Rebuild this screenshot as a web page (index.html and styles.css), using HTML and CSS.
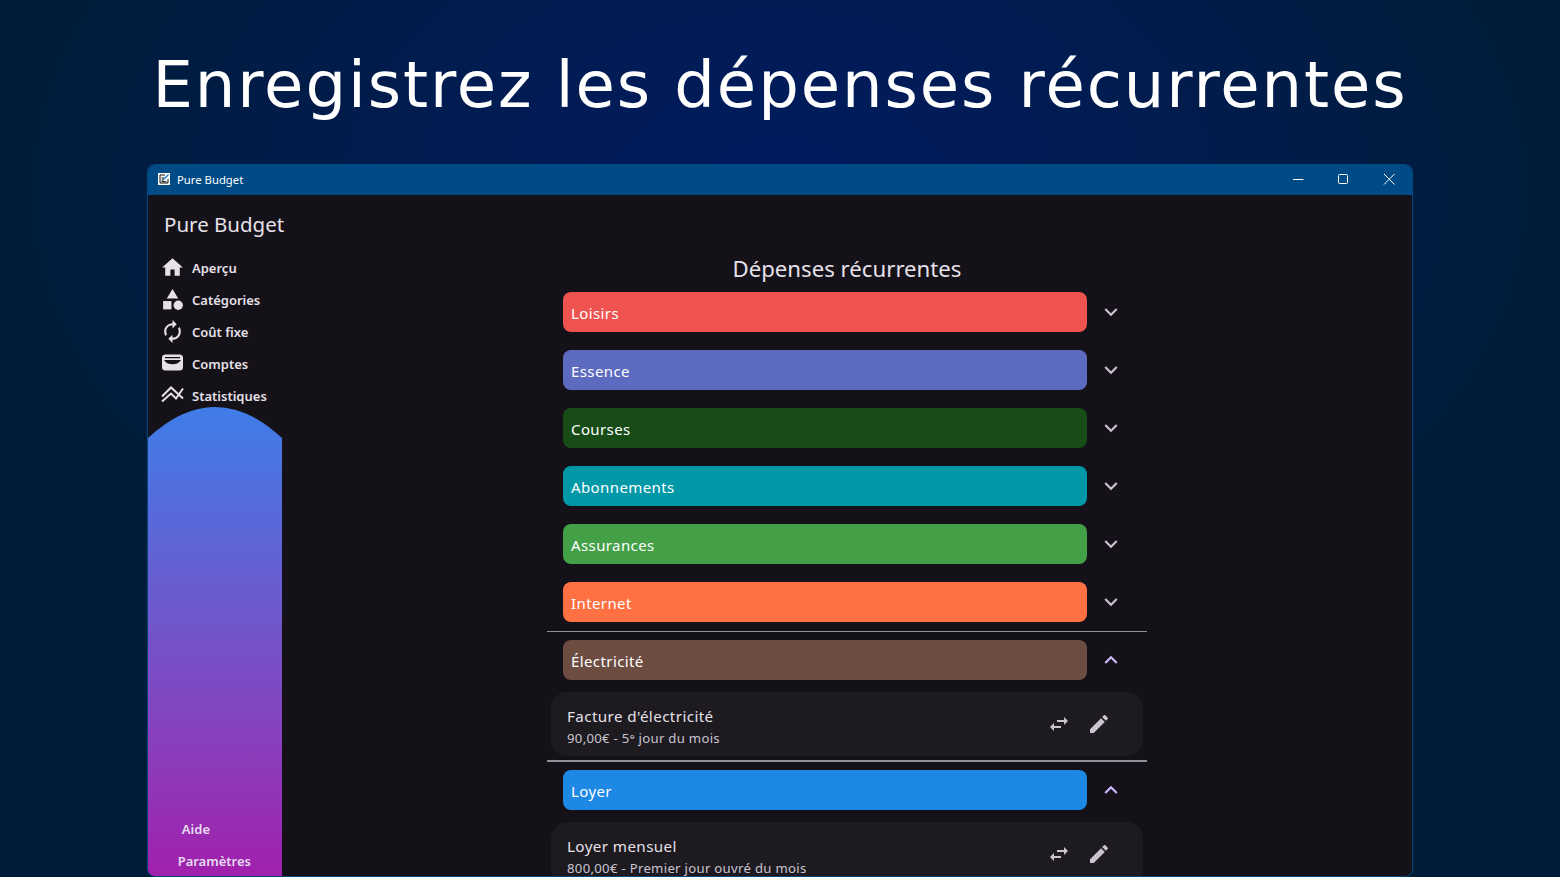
FILE: index.html
```html
<!DOCTYPE html>
<html lang="fr">
<head>
    <meta charset="UTF-8">
    <meta name="viewport" content="width=device-width, initial-scale=1.0">
    <title>Pure Budget</title>
    <link rel="stylesheet" href="styles.css">
</head>
<body>
    <h1 class="headline">Enregistrez les dépenses récurrentes</h1>

    <div class="window">
        <div class="titlebar">
            <svg class="app-logo" viewBox="0 0 12 12">
                <rect width="12" height="12" fill="#fff"/>
                <path d="M7 2H2v8h8V6M3.500 5H6M3.500 7h2.500M3.500 8.700h5" fill="none" stroke="#111" stroke-width="1"/>
                <path d="M5.500 6.500L10.500 1.500" stroke="#1a7fd0" stroke-width="1.500"/>
            </svg>
            <span class="app-name">Pure Budget</span>
            <div class="win-buttons">
                <svg class="win-btn" viewBox="0 0 46 30"><path d="M19 14.500h10.500" stroke="#fff" fill="none"/></svg>
                <svg class="win-btn" viewBox="0 0 46 30"><rect x="18.500" y="9.500" width="9" height="9" rx="1" stroke="#fff" fill="none"/></svg>
                <svg class="win-btn" viewBox="0 0 46 30"><path d="M18 9l10.500 10.500M28.500 9L18 19.500" stroke="#fff" fill="none"/></svg>
            </div>
        </div>

        <div class="app">
            <aside class="sidebar">
                <div class="brand">Pure Budget</div>
                <nav class="nav">
                    <a class="nav-item">
                        <svg class="nav-icon" viewBox="0 0 24 24"><path d="M10 20v-6h4v6h5v-8h3L12 3 2 12h3v8z"/></svg>
                        Aperçu
                    </a>
                    <a class="nav-item">
                        <svg class="nav-icon" viewBox="0 0 24 24"><path d="M12 2l-5.500 9h11z"/><circle cx="17.500" cy="17.500" r="4.500"/><path d="M3 13.500h8v8H3z"/></svg>
                        Catégories
                    </a>
                    <a class="nav-item">
                        <svg class="nav-icon" viewBox="0 0 24 24"><path d="M12 6v3l4-4-4-4v3c-4.420 0-8 3.580-8 8 0 1.570.460 3.030 1.240 4.260L6.700 14.800c-.450-.830-.700-1.790-.700-2.800 0-3.310 2.690-6 6-6zm6.760 1.740L17.300 9.200c.440.840.700 1.790.700 2.800 0 3.310-2.690 6-6 6v-3l-4 4 4 4v-3c4.420 0 8-3.580 8-8 0-1.570-.460-3.030-1.240-4.260z"/></svg>
                        Coût fixe
                    </a>
                    <a class="nav-item">
                        <svg class="nav-icon" viewBox="0 0 25 25"><path fill-rule="evenodd" d="M5.500 3.500h14a3.500 3.500 0 0 1 3.500 3.500v9a3.500 3.500 0 0 1-3.500 3.500h-14A3.500 3.500 0 0 1 2 16V7a3.500 3.500 0 0 1 3.500-3.500zM5 6v1.200h15V6zM4 9c1.500 2.800 4.500 4.200 8.500 4.200S19.500 11.800 21 9z"/></svg>
                        Comptes
                    </a>
                    <a class="nav-item">
                        <svg class="nav-icon line" viewBox="0 0 25 25"><path d="M2 13.500l9-9 12 11M2 18.500l9-8 5 5 7-10"/></svg>
                        Statistiques
                    </a>
                </nav>
                <div class="wave">
                    <a class="wave-link wave-help">Aide</a>
                    <a class="wave-link">Paramètres</a>
                </div>
            </aside>

            <main class="content">
                <div class="column">
                    <h2 class="page-title">Dépenses récurrentes</h2>

                    <div class="cat-row">
                        <div class="cat-bar loisirs">Loisirs</div>
                        <svg class="chevron" viewBox="0 0 24 24"><path d="M16.590 8.590L12 13.170 7.410 8.590 6 10l6 6 6-6z"/></svg>
                    </div>
                    <div class="cat-row">
                        <div class="cat-bar essence">Essence</div>
                        <svg class="chevron" viewBox="0 0 24 24"><path d="M16.590 8.590L12 13.170 7.410 8.590 6 10l6 6 6-6z"/></svg>
                    </div>
                    <div class="cat-row">
                        <div class="cat-bar courses">Courses</div>
                        <svg class="chevron" viewBox="0 0 24 24"><path d="M16.590 8.590L12 13.170 7.410 8.590 6 10l6 6 6-6z"/></svg>
                    </div>
                    <div class="cat-row">
                        <div class="cat-bar abonnements">Abonnements</div>
                        <svg class="chevron" viewBox="0 0 24 24"><path d="M16.590 8.590L12 13.170 7.410 8.590 6 10l6 6 6-6z"/></svg>
                    </div>
                    <div class="cat-row">
                        <div class="cat-bar assurances">Assurances</div>
                        <svg class="chevron" viewBox="0 0 24 24"><path d="M16.590 8.590L12 13.170 7.410 8.590 6 10l6 6 6-6z"/></svg>
                    </div>
                    <div class="cat-row">
                        <div class="cat-bar internet">Internet</div>
                        <svg class="chevron" viewBox="0 0 24 24"><path d="M16.590 8.590L12 13.170 7.410 8.590 6 10l6 6 6-6z"/></svg>
                    </div>

                    <section class="group">
                        <div class="cat-row open">
                            <div class="cat-bar electricite">Électricité</div>
                            <svg class="chevron up" viewBox="0 0 24 24"><path d="M12 8l-6 6 1.410 1.410L12 10.830l4.590 4.580L18 14z"/></svg>
                        </div>
                        <div class="expense">
                            <div class="expense-text">
                                <div class="expense-name">Facture d'électricité</div>
                                <div class="expense-detail">90,00€ - 5ᵉ jour du mois</div>
                            </div>
                            <svg class="action" viewBox="0 0 24 24"><path d="M6.990 11L3 15l3.990 4v-3H14v-2H6.990v-3zM21 9l-3.990-4v3H10v2h7.010v3L21 9z"/></svg>
                            <svg class="action" viewBox="0 0 24 24"><path d="M3 17.250V21h3.750L17.810 9.940l-3.750-3.750L3 17.250zM20.710 7.040c.390-.390.390-1.020 0-1.410l-2.340-2.340c-.390-.390-1.020-.390-1.410 0l-1.830 1.830 3.750 3.750 1.830-1.830z"/></svg>
                        </div>
                    </section>

                    <section class="group second">
                        <div class="cat-row open">
                            <div class="cat-bar loyer">Loyer</div>
                            <svg class="chevron up" viewBox="0 0 24 24"><path d="M12 8l-6 6 1.410 1.410L12 10.830l4.590 4.580L18 14z"/></svg>
                        </div>
                        <div class="expense">
                            <div class="expense-text">
                                <div class="expense-name">Loyer mensuel</div>
                                <div class="expense-detail">800,00€ - Premier jour ouvré du mois</div>
                            </div>
                            <svg class="action" viewBox="0 0 24 24"><path d="M6.990 11L3 15l3.990 4v-3H14v-2H6.990v-3zM21 9l-3.990-4v3H10v2h7.010v3L21 9z"/></svg>
                            <svg class="action" viewBox="0 0 24 24"><path d="M3 17.250V21h3.750L17.810 9.940l-3.750-3.750L3 17.250zM20.710 7.040c.390-.390.390-1.020 0-1.410l-2.340-2.340c-.390-.390-1.020-.390-1.410 0l-1.830 1.830 3.750 3.750 1.830-1.830z"/></svg>
                        </div>
                    </section>
                </div>
            </main>
        </div>
    </div>
</body>
</html>
```

FILE: styles.css
```css
* {
    box-sizing: border-box;
}
html, body {
    height: 100%;
}
body {
    margin: 0;
    overflow: hidden;
    display: flex;
    flex-direction: column;
    font-family: "Noto Sans", "Open Sans", sans-serif;
    background: radial-gradient(ellipse 800px 520px at 780px 190px, #001b60 0%, #011c50 45%, #011c38 100%);
    background-color: #011c38;
}
.headline {
    margin: 0;
    height: 164px;
    padding-top: 45px;
    text-align: center;
    font-family: "DejaVu Sans", sans-serif;
    font-weight: 400;
    font-size: 64px;
    letter-spacing: 1.920px;
    line-height: 80px;
    color: #fff;
    white-space: nowrap;
}

/* window */
.window {
    flex: 1;
    min-height: 0;
    margin: 0 147px 0 147px;
    display: flex;
    flex-direction: column;
    border: 1px solid #00497f;
    border-radius: 8px;
    overflow: hidden;
    background: #141218;
}
.titlebar {
    height: 30px;
    flex: none;
    display: flex;
    align-items: center;
    padding: 0 0 2px 10px;
    background: #004a85;
    color: #fff;
}
.app-logo {
    width: 12px;
    height: 12px;
    margin-right: 7px;
}
.app-name {
    font-size: 11.300px;
}
.win-buttons {
    margin-left: auto;
    display: flex;
}
.win-btn {
    width: 46px;
    height: 30px;
    margin-bottom: -2px;
}

.app {
    flex: 1;
    min-height: 0;
    display: flex;
}

/* sidebar */
.sidebar {
    width: 134px;
    flex: none;
    display: flex;
    flex-direction: column;
}
.brand {
    padding: 15px 0 0 16px;
    height: 57px;
    font-size: 20.500px;
    line-height: 28px;
    color: #e6e0e9;
    white-space: nowrap;
}
.nav {
    flex: none;
    height: 155px;
}
.nav-item {
    height: 32px;
    display: flex;
    align-items: center;
    gap: 7px;
    padding-left: 12px;
    font-size: 13px;
    font-weight: 600;
    color: #e6e0e9;
    white-space: nowrap;
}
.nav-icon {
    width: 25px;
    height: 25px;
    flex: none;
    margin-bottom: 2px;
    fill: #e6e0e9;
}
.nav-icon.line {
    fill: none;
    stroke: #e6e0e9;
    stroke-width: 2;
}
.wave {
    flex: 1;
    display: flex;
    flex-direction: column;
    justify-content: flex-end;
    align-items: flex-end;
    padding: 0 31px 0 0;
    clip-path: path("M0 31 Q67 -31 134 31 V480 H0 Z");
    background: linear-gradient(180deg, #3f7de8 0%, #6a5bcf 40%, #8c3cba 75%, #a020ac 100%);
}
.wave-link {
    height: 32px;
    line-height: 34px;
    font-size: 13px;
    font-weight: 600;
    color: #e6dcf0;
}
.wave-help {
    margin-right: 41px;
}

/* main column */
.content {
    flex: 1;
    min-width: 0;
    overflow: hidden;
    display: flex;
    justify-content: center;
}
.column {
    width: 600px;
    flex: none;
    padding-top: 58px;
}
.page-title {
    margin: 0;
    height: 39px;
    text-align: center;
    font-size: 22.200px;
    font-weight: 400;
    line-height: 31px;
    color: #e6e0e9;
}
.cat-row {
    height: 58px;
    display: flex;
    align-items: flex-start;
    padding-left: 16px;
}
.cat-bar {
    width: 524px;
    height: 40px;
    padding: 0 8px;
    border-radius: 8px;
    font-size: 15px;
    line-height: 43px;
    letter-spacing: 0.400px;
    color: #fff;
}
.chevron {
    width: 26px;
    height: 26px;
    margin: 7px 0 0 11px;
    fill: #cac4d0;
}
.chevron.up {
    fill: #d0bcff;
}
.loisirs { background: #ef5350; }
.essence { background: #5c6bc0; }
.courses { background: #174c17; }
.abonnements { background: #0097a7; }
.assurances { background: #43a047; }
.internet { background: #ff7043; }
.electricite { background: #6d4c41; }
.loyer { background: #1e88e5; }

/* opened categories */
.group {
    border-top: 1px solid #938f99;
    padding-top: 8px;
    margin-top: -9px;
}
.group.second {
    border-top-width: 2px;
    margin-top: 4px;
}
.cat-row.open {
    height: 52px;
}
.expense {
    display: flex;
    align-items: center;
    height: 64px;
    margin: 0 4px;
    padding: 0 32px 0 16px;
    border-radius: 16px;
    background: #1d1b20;
}
.expense-text {
    flex: 1;
    min-width: 0;
    align-self: flex-start;
    padding-top: 13px;
}
.expense-name {
    font-size: 15.200px;
    line-height: 22px;
    letter-spacing: 0.400px;
    color: #e6e0e9;
}
.expense-detail {
    font-size: 13.150px;
    line-height: 22px;
    letter-spacing: 0.300px;
    color: #cac4d0;
}
.action {
    width: 24px;
    height: 24px;
    margin-left: 16px;
    fill: #cac4d0;
}
```
